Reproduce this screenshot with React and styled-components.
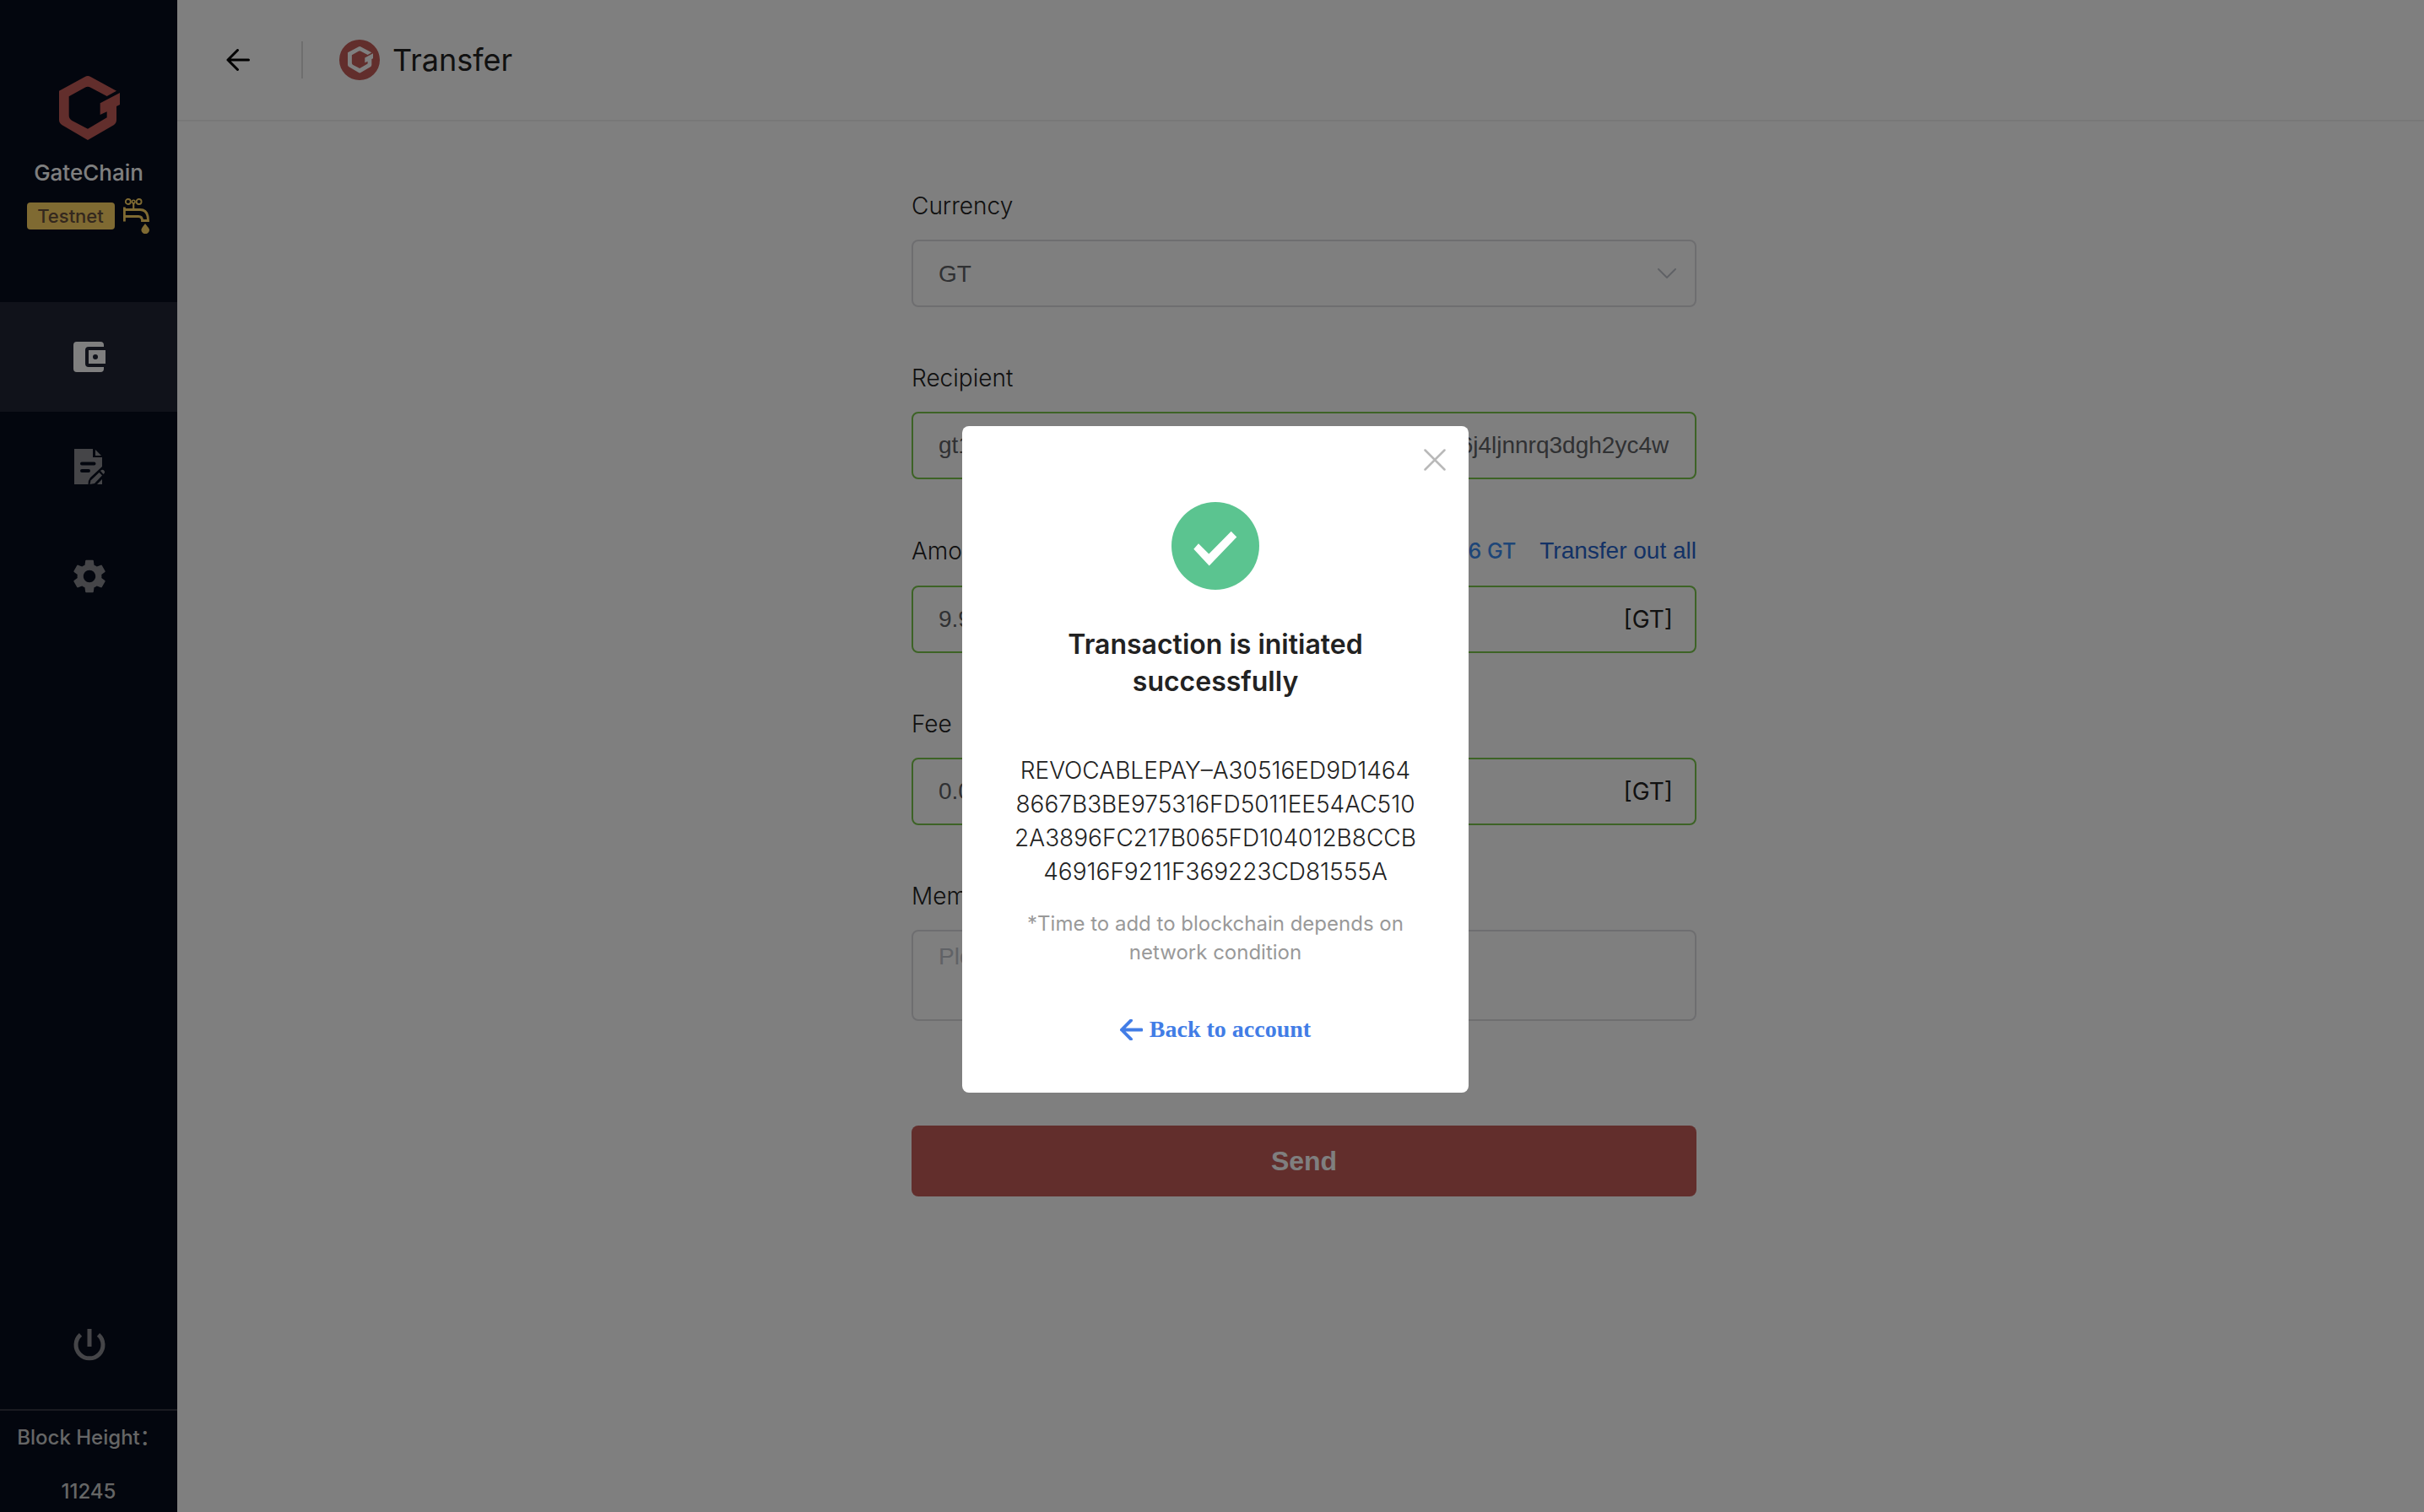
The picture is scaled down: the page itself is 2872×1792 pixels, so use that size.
import React from "react";
import styled, { createGlobalStyle } from "styled-components";
import { MdSettings } from "react-icons/md";

const sans = `Inter, "Liberation Sans", "Noto Sans CJK SC", sans-serif`;
const arial = `"Liberation Sans", Arial, sans-serif`;

const GlobalStyle = createGlobalStyle`
  *, *::before, *::after { box-sizing: border-box; }
  body { margin: 0; background: #fff; color: #222; font-family: ${sans}; font-size: 28px; }
  button, input, select, textarea { font: inherit; color: inherit; }
  button { border: 0; padding: 0; background: none; cursor: pointer; }
  a { text-decoration: none; }
  svg { display: block; flex: none; }
`;

const Page = styled.div`
  display: flex;
  min-height: 100vh;
`;

/* ---------- sidebar ---------- */

const Sidebar = styled.aside`
  flex: none;
  display: flex;
  flex-direction: column;
  width: 210px;
  padding-top: 90px;
  background: #060c1c;
  color: #fff;
`;

const Brand = styled.div`
  display: flex;
  flex-direction: column;
  align-items: center;
`;

const BrandMark = styled.div`
  padding-left: 2px;
`;

const BrandName = styled.div`
  margin-top: 19px;
  font-size: 26px;
  font-weight: 500;
  line-height: 40px;
`;

const NetworkRow = styled.div`
  display: flex;
  align-items: center;
  gap: 10px;
  margin-top: 10px;
  padding-right: 2px;
`;

const NetworkTag = styled.span`
  width: 104px;
  border-radius: 4px;
  background: #fed464;
  color: #68503c;
  font-size: 22px;
  font-weight: 500;
  line-height: 32px;
  text-align: center;
`;

const Nav = styled.nav`
  display: flex;
  flex-direction: column;
  margin-top: 81px;
`;

const NavItem = styled.a`
  display: flex;
  align-items: center;
  justify-content: center;
  height: 130px;
  padding-left: 2px;
  background: ${(p) => (p.$active ? "#202534" : "transparent")};
  color: ${(p) => (p.$active ? "#fff" : "#8a8b91")};
`;

const PowerButton = styled.button`
  display: flex;
  justify-content: center;
  margin-top: auto;
  padding: 0 0 57px 2px;
  color: #8a8b91;
`;

const BlockHeight = styled.dl`
  display: flex;
  flex-direction: column;
  gap: 16px;
  margin: 0;
  padding-top: 8px;
  border-top: 2px solid #343742;
  color: #ccc;
  font-size: 24px;
  font-weight: 500;
  line-height: 48px;
  text-align: center;
  white-space: nowrap;

  dt, dd { margin: 0; }
`;

/* ---------- main column ---------- */

const Main = styled.main`
  flex: 1;
  min-width: 0;
  display: flex;
  flex-direction: column;
`;

const Header = styled.header`
  display: flex;
  align-items: center;
  height: 144px;
  padding-left: 58px;
  border-bottom: 2px solid #f0f0f0;
`;

const BackButton = styled.button`
  color: #000;
`;

const Divider = styled.span`
  width: 2px;
  height: 44px;
  margin: 0 43px 0 61px;
  background: #dcdcdc;
`;

const PageTitle = styled.h1`
  margin: 0 0 0 15px;
  font-size: 36px;
  font-weight: 400;
  line-height: 48px;
`;

const Form = styled.form`
  display: flex;
  flex-direction: column;
  gap: 64px;
  width: 100%;
  max-width: 938px;
  margin: 0 auto;
  padding: 80px 0 80px 8px;
`;

const Field = styled.div`
  display: flex;
  flex-direction: column;
  gap: 20px;
`;

const Label = styled.label`
  font-weight: 300;
  line-height: 40px;
`;

const LabelRow = styled.div`
  display: flex;
  align-items: center;
  height: 42px;
`;

const Balance = styled.span`
  margin-left: auto;
  color: #3c8cf0;
  font-size: 25px;
  font-weight: 500;
`;

const LinkButton = styled.button`
  margin-left: 28px;
  color: #2764cc;
  font-family: ${arial};
  font-size: 28px;
`;

const Box = styled.div`
  position: relative;
  display: flex;
  align-items: center;
  height: ${(p) => (p.$tall ? "108px" : "80px")};
  border: 2px solid ${(p) => (p.$valid ? "#7ac74c" : "#dcdce0")};
  border-radius: 8px;
`;

const controlStyle = `
  flex: 1;
  min-width: 0;
  width: 100%;
  height: 100%;
  border: 0;
  outline: 0;
  background: none;
  color: #606266;
  font-family: ${arial};
  font-size: 28px;
`;

const Input = styled.input`
  ${controlStyle}
  padding: 0 30px;
`;

const Select = styled.select`
  ${controlStyle}
  padding: 0 30px;
  appearance: none;
`;

const TextArea = styled.textarea`
  ${controlStyle}
  padding: 10px 30px;
  line-height: 40px;
  resize: none;

  &::placeholder { color: #c0c4cc; opacity: 1; }
`;

const Unit = styled.span`
  padding-right: 26px;
`;

const SelectArrow = styled.svg`
  position: absolute;
  right: 22px;
  top: 32px;
  pointer-events: none;
`;

const SendButton = styled.button`
  height: 84px;
  margin-top: 60px;
  border-radius: 8px;
  background: #c45c58;
  color: #fff;
  font-family: ${arial};
  font-size: 32px;
  font-weight: 700;
`;

/* ---------- dialog ---------- */

const Overlay = styled.div`
  position: fixed;
  inset: 0;
  display: flex;
  align-items: center;
  justify-content: center;
  padding: 8px 0 0 8px;
  background: rgba(0, 0, 0, 0.5);
`;

const Dialog = styled.section`
  position: relative;
  display: flex;
  flex-direction: column;
  align-items: center;
  width: 600px;
  padding: 90px 56px 55px;
  border-radius: 8px;
  background: #fff;
  text-align: center;
`;

const CloseButton = styled.button`
  position: absolute;
  top: 27px;
  right: 27px;
  color: #b9b9b9;
`;

const DialogTitle = styled.h2`
  margin: 43px 0 0;
  font-size: 32px;
  font-weight: 600;
  line-height: 44px;
`;

const Hash = styled.p`
  margin: 63px 0 0;
  font-weight: 300;
  line-height: 40px;

  span { display: block; }
`;

const Note = styled.p`
  margin: 25px 0 0;
  color: #999;
  font-size: 24px;
  line-height: 34px;
`;

const BackLink = styled.a`
  display: flex;
  align-items: center;
  gap: 8px;
  margin-top: 54px;
  color: #427de6;
  font-family: "Liberation Serif", "Times New Roman", serif;
  font-weight: 700;
  line-height: 40px;
`;

/* ---------- drawings ---------- */

const GateMark = ({ color = "#c45c58", size = 72 }) => (
  <svg width={size} height={(size * 19) / 18} viewBox="0 0 216 228" aria-hidden="true">
    <path
      fill={color}
      d="M92 3 Q102 -3 112 3 L204 53 L170 72 L112 41 Q102 35 92 41 L35 73 V140 Q35 152 46 159 L102 188 L170 148 V127 L146 138 V97 L216 60 V102 L204 108 V156 Q204 168 194 175 L102 228 L11 175 Q0 168 0 156 V53 Z"
    />
  </svg>
);

const FaucetIcon = () => (
  <svg width="31" height="42" viewBox="0 0 31 42" fill="none" stroke="#fed464" aria-hidden="true">
    <circle cx="5.8" cy="4" r="3" strokeWidth="1.8" />
    <circle cx="12.2" cy="4" r="1.8" strokeWidth="1.6" />
    <circle cx="18.6" cy="4" r="3" strokeWidth="1.8" />
    <path d="M12.2 6 V13" strokeWidth="2.2" />
    <path d="M1.4 10.5 V27.5" strokeWidth="2.8" />
    <path d="M2 13.5 H20 C26 13.5 29.5 18 29.5 26.5 H22.5 C22.5 23 21 21.5 18 21.5 H2" strokeWidth="2.8" />
    <path
      d="M26 30 C28.5 33.5 31 35.5 31 37.6 A4.8 4.6 0 0 1 21.4 37.6 C21.4 35.5 23.6 33.5 26 30 Z"
      fill="#fed464"
      stroke="none"
    />
  </svg>
);

const WalletIcon = () => (
  <svg width="38" height="36" viewBox="0 0 38 36" fill="currentColor" aria-hidden="true">
    <path d="M4 0 H32 Q36 0 36 4 V6 H18 Q14 6 14 10 V26 Q14 30 18 30 H36 V32 Q36 36 32 36 H4 Q0 36 0 32 V4 Q0 0 4 0 Z" />
    <path fillRule="evenodd" d="M18 10 H38 V26 H18 Z M23 18 a3 3 0 1 0 6 0 a3 3 0 1 0 -6 0 Z" />
  </svg>
);

const RecordIcon = () => (
  <svg width="36" height="42" viewBox="0 0 36 42" fill="currentColor" aria-hidden="true">
    <path
      fillRule="evenodd"
      d="M0 0 H22 V10 H33 V21 L19 34 Q16.5 37 16.5 42 H0 Z M9 15.5 a2 2 0 0 0 0 4 H23.5 a2 2 0 0 0 0 -4 Z M9 24 a2 2 0 0 0 0 4 H17 a2 2 0 0 0 0 -4 Z"
    />
    <path d="M25 1 L32 8 H25 Z" />
    <path d="M29.5 28 L33 31.5 L24 41 L18.5 42 L19.5 37.5 Z" />
    <path d="M31 26 Q33.5 23.5 35.5 26 Q37 28 34.5 30 Z" />
    <path d="M33 36 V42 H27 Z" />
  </svg>
);

const PowerIcon = () => (
  <svg width="38" height="38" viewBox="0 0 38 38" fill="none" stroke="currentColor" strokeWidth="5" aria-hidden="true">
    <path d="M19 0 V21" />
    <path d="M8.5 6.8 A16 16 0 1 0 29.5 6.8" />
  </svg>
);

const ArrowLeft = ({ width = 28, height = 26, stroke = 3 }) => (
  <svg
    width={width}
    height={height}
    viewBox="0 0 28 26"
    fill="none"
    stroke="currentColor"
    strokeWidth={stroke}
    strokeLinecap="round"
    strokeLinejoin="round"
    aria-hidden="true"
  >
    <path d="M26.5 13 H2 M13.5 1.5 L2 13 L13.5 24.5" />
  </svg>
);

const hashLines = [
  "REVOCABLEPAY–A30516ED9D1464",
  "8667B3BE975316FD5011EE54AC510",
  "2A3896FC217B065FD104012B8CCB",
  "46916F9211F369223CD81555A",
];

export default function App() {
  return (
    <Page>
      <GlobalStyle />
      <Sidebar>
        <Brand>
          <BrandMark><GateMark /></BrandMark>
          <BrandName>GateChain</BrandName>
          <NetworkRow>
            <NetworkTag>Testnet</NetworkTag>
            <button type="button" aria-label="Faucet"><FaucetIcon /></button>
          </NetworkRow>
        </Brand>
        <Nav>
          <NavItem href="#wallet" aria-label="Wallet" $active><WalletIcon /></NavItem>
          <NavItem href="#records" aria-label="Records"><RecordIcon /></NavItem>
          <NavItem href="#settings" aria-label="Settings"><MdSettings size={48} /></NavItem>
        </Nav>
        <PowerButton type="button" aria-label="Log out"><PowerIcon /></PowerButton>
        <BlockHeight>
          <dt>Block Height：</dt>
          <dd>11245</dd>
        </BlockHeight>
      </Sidebar>

      <Main>
        <Header>
          <BackButton type="button" aria-label="Back"><ArrowLeft /></BackButton>
          <Divider />
          <svg width="48" height="48" viewBox="0 0 48 48" aria-hidden="true">
            <circle cx="24" cy="24" r="24" fill="#c45c58" />
            <g transform="translate(10 8)"><GateMark color="#fff" size={30} /></g>
          </svg>
          <PageTitle>Transfer</PageTitle>
        </Header>

        <Form onSubmit={(e) => e.preventDefault()}>
          <Field>
            <Label htmlFor="currency">Currency</Label>
            <Box>
              <Select id="currency" defaultValue="GT">
                <option>GT</option>
              </Select>
              <SelectArrow width="22" height="12" viewBox="0 0 22 12" fill="none" stroke="#c0c4cc" strokeWidth="2" strokeLinecap="round">
                <path d="M1 1 L11 11 L21 1" />
              </SelectArrow>
            </Box>
          </Field>

          <Field>
            <Label htmlFor="recipient">Recipient</Label>
            <Box $valid>
              <Input id="recipient" defaultValue="gt11qd8n4epu70ha53u9ge26na0dwh8pqun3n5e26j4ljnnrq3dgh2yc4w" />
            </Box>
          </Field>

          <Field>
            <LabelRow>
              <Label htmlFor="amount">Amount</Label>
              <Balance>Balance 9.9996 GT</Balance>
              <LinkButton type="button">Transfer out all</LinkButton>
            </LabelRow>
            <Box $valid>
              <Input id="amount" defaultValue="9.9" />
              <Unit>[GT]</Unit>
            </Box>
          </Field>

          <Field>
            <Label htmlFor="fee">Fee</Label>
            <Box $valid>
              <Input id="fee" defaultValue="0.0" />
              <Unit>[GT]</Unit>
            </Box>
          </Field>

          <Field>
            <Label htmlFor="memo">Memo</Label>
            <Box $tall>
              <TextArea id="memo" placeholder="Please enter" />
            </Box>
          </Field>

          <SendButton type="submit">Send</SendButton>
        </Form>
      </Main>

      <Overlay>
        <Dialog role="dialog" aria-modal="true" aria-labelledby="dialog-title">
          <CloseButton type="button" aria-label="Close">
            <svg width="26" height="26" viewBox="0 0 26 26" fill="none" stroke="currentColor" strokeWidth="2.5" strokeLinecap="round">
              <path d="M1.5 1.5 L24.5 24.5 M24.5 1.5 L1.5 24.5" />
            </svg>
          </CloseButton>
          <svg width="104" height="104" viewBox="0 0 104 104" aria-hidden="true">
            <circle cx="52" cy="52" r="52" fill="#5bc490" />
            <path fill="#fff" d="M26.3 55.8 L32 49.2 L44.3 61.5 L70.7 34.8 L77.3 41.5 L44.7 75.5 Z" />
          </svg>
          <DialogTitle id="dialog-title">Transaction is initiated successfully</DialogTitle>
          <Hash>{hashLines.map((line) => <span key={line}>{line}</span>)}</Hash>
          <Note>*Time to add to blockchain depends on network condition</Note>
          <BackLink href="#account">
            <ArrowLeft width={27} height={25} stroke={4} />
            Back to account
          </BackLink>
        </Dialog>
      </Overlay>
    </Page>
  );
}
